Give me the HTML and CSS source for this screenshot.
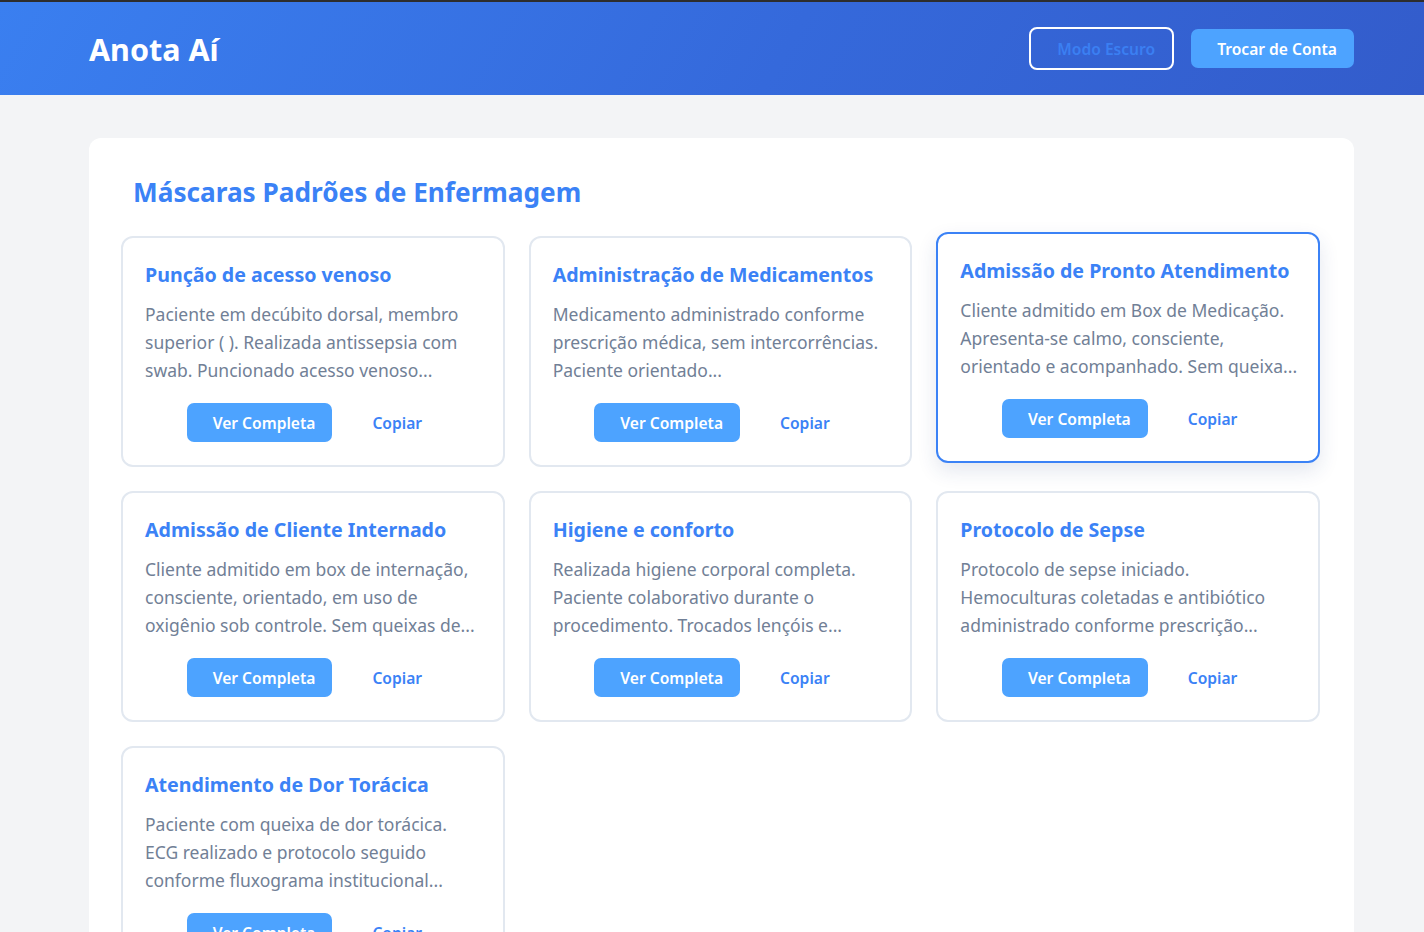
FILE: index.html
```html
<!DOCTYPE html>
<html lang="pt-BR">
<head>
<meta charset="utf-8">
<title>Anota Aí</title>
<link rel="stylesheet" href="styles.css">
</head>
<body>
<header class="topbar">
  <div class="topbar-inner">
    <h1 class="brand">Anota Aí</h1>
    <div class="top-actions">
      <button class="btn btn-outline">Modo Escuro</button>
      <button class="btn btn-primary">Trocar de Conta</button>
    </div>
  </div>
</header>
<main class="page">
  <section class="panel">
    <h2 class="panel-title">Máscaras Padrões de Enfermagem</h2>
    <div class="grid">
      <article class="card">
        <h3 class="card-title">Punção de acesso venoso</h3>
        <p class="card-text">Paciente em decúbito dorsal, membro superior ( ). Realizada antissepsia com swab. Puncionado acesso venoso...</p>
        <div class="card-actions"><button class="btn btn-primary">Ver Completa</button><button class="btn btn-link">Copiar</button></div>
      </article>
      <article class="card">
        <h3 class="card-title">Administração de Medicamentos</h3>
        <p class="card-text">Medicamento administrado conforme prescrição médica, sem intercorrências. Paciente orientado...</p>
        <div class="card-actions"><button class="btn btn-primary">Ver Completa</button><button class="btn btn-link">Copiar</button></div>
      </article>
      <article class="card card-active">
        <h3 class="card-title">Admissão de Pronto Atendimento</h3>
        <p class="card-text">Cliente admitido em Box de Medicação. Apresenta-se calmo, consciente, orientado e acompanhado. Sem queixa...</p>
        <div class="card-actions"><button class="btn btn-primary">Ver Completa</button><button class="btn btn-link">Copiar</button></div>
      </article>
      <article class="card">
        <h3 class="card-title">Admissão de Cliente Internado</h3>
        <p class="card-text">Cliente admitido em box de internação, consciente, orientado, em uso de oxigênio sob controle. Sem queixas de...</p>
        <div class="card-actions"><button class="btn btn-primary">Ver Completa</button><button class="btn btn-link">Copiar</button></div>
      </article>
      <article class="card">
        <h3 class="card-title">Higiene e conforto</h3>
        <p class="card-text">Realizada higiene corporal completa. Paciente colaborativo durante o procedimento. Trocados lençóis e...</p>
        <div class="card-actions"><button class="btn btn-primary">Ver Completa</button><button class="btn btn-link">Copiar</button></div>
      </article>
      <article class="card">
        <h3 class="card-title">Protocolo de Sepse</h3>
        <p class="card-text">Protocolo de sepse iniciado. Hemoculturas coletadas e antibiótico administrado conforme prescrição...</p>
        <div class="card-actions"><button class="btn btn-primary">Ver Completa</button><button class="btn btn-link">Copiar</button></div>
      </article>
      <article class="card">
        <h3 class="card-title">Atendimento de Dor Torácica</h3>
        <p class="card-text">Paciente com queixa de dor torácica. ECG realizado e protocolo seguido conforme fluxograma institucional...</p>
        <div class="card-actions"><button class="btn btn-primary">Ver Completa</button><button class="btn btn-link">Copiar</button></div>
      </article>
    </div>
  </section>
</main>
</body>
</html>
```
FILE: styles.css
```css
* { box-sizing: border-box; }
html, body { margin: 0; padding: 0; }
body {
  font-family: "Noto Sans", "Open Sans", sans-serif;
  background: #f3f4f6;
  border-top: 2px solid #2d2d2d;
  overflow: hidden;
}
.topbar {
  height: 93px;
  background: linear-gradient(120deg, #3a7ff0 0%, #3569db 55%, #335ccb 100%);
  padding: 0 70px 0 89px;
}
.topbar-inner {
  height: 100%;
  display: flex;
  align-items: center;
  justify-content: space-between;
}
.brand {
  margin: 0;
  color: #fff;
  font-size: 30.5px;
  font-weight: 700;
}
.top-actions { display: flex; align-items: center; gap: 17px; }
.btn {
  font-family: inherit;
  font-size: 15.6px;
  font-weight: 600;
  height: 39px;
  padding: 0 17px 0 26px;
  border: none;
  border-radius: 7px;
  cursor: pointer;
}
.btn-primary { background: #4da3ff; color: #fff; }
.btn-outline {
  background: transparent;
  border: 2px solid #fff;
  color: #3b7ff2;
  height: 43px;
  border-radius: 8px;
}
.btn-link { background: transparent; color: #3b82f6; }
.page { padding: 43px 70px 0 89px; }
.panel {
  background: #fff;
  border-radius: 12px;
  padding: 34px 34px 32px 32px;
  min-height: 900px;
}
.panel-title {
  margin: 0 0 24px 12px;
  color: #3b82f6;
  font-size: 26.2px;
  font-weight: 700;
  line-height: 40px;
}
.grid {
  display: grid;
  grid-template-columns: repeat(3, 1fr);
  gap: 24px;
}
.card {
  border: 2px solid #e2e8f0;
  border-radius: 12px;
  padding: 23px 20px 23px 22px;
  background: #fff;
}
.card-active {
  border-color: #3b82f6;
  transform: translateY(-4px);
  box-shadow: 0 8px 20px rgba(30, 60, 120, 0.12);
}
.card-title {
  margin: 0 0 11px;
  color: #3b82f6;
  font-size: 19.6px;
  font-weight: 700;
  line-height: 28px;
  white-space: nowrap;
}
.card-text {
  margin: 0 0 19px;
  color: #718096;
  font-size: 17.5px;
  line-height: 28px;
}
.card-actions { display: flex; justify-content: center; gap: 14px; margin-left: -2px; }
```
